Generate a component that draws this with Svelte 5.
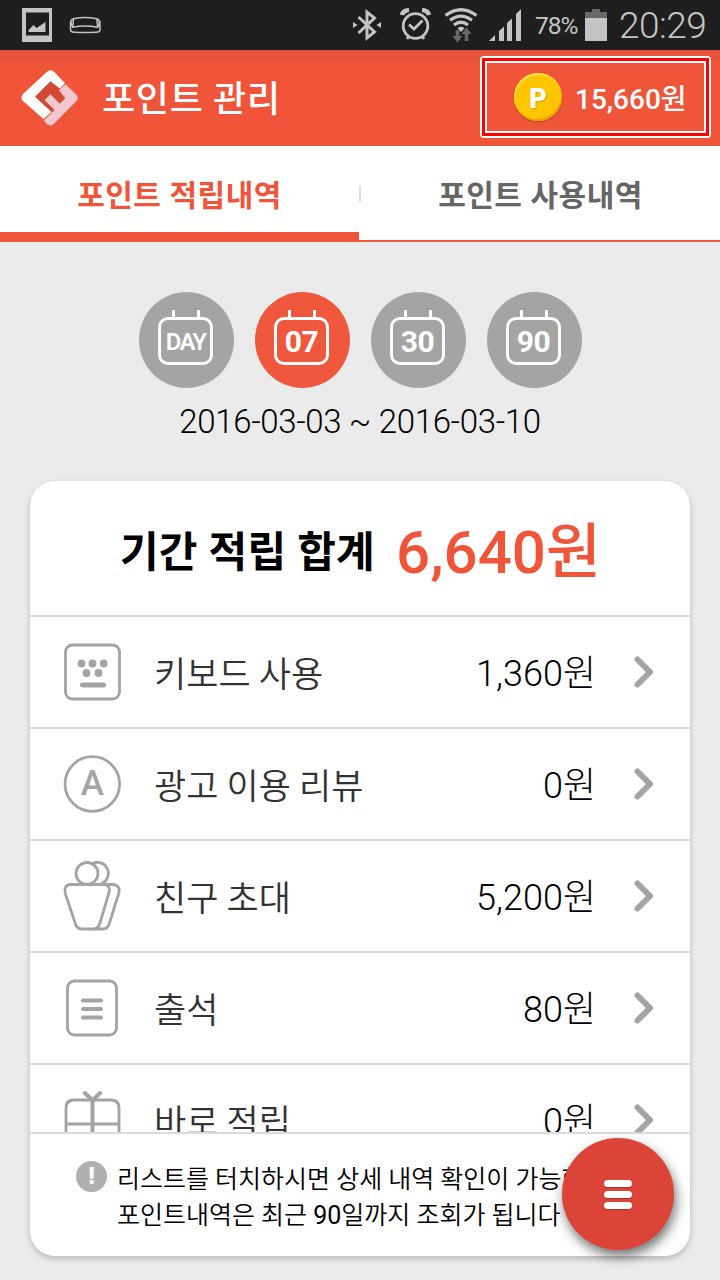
<script>
	const periods = [
		{ id: 'day', label: 'DAY' },
		{ id: '07', label: '07' },
		{ id: '30', label: '30' },
		{ id: '90', label: '90' },
	];
	const rows = [
		{ icon: 'keyboard', name: '키보드 사용', amount: '1,360' },
		{ icon: 'ad', name: '광고 이용 리뷰', amount: '0' },
		{ icon: 'friends', name: '친구 초대', amount: '5,200' },
		{ icon: 'attend', name: '출석', amount: '80' },
		{ icon: 'gift', name: '바로 적립', amount: '0' },
	];

	let tab = $state('earn');
	let period = $state('07');
</script>

<div class="screen">
	<div class="status">
		<svg class="notif" width="110" height="50" viewBox="0 0 110 50">
			<path d="M22 8h30v34H22zM26 12.500v23h23v-23z" fill="#c4c4c4" fill-rule="evenodd" />
			<path d="M28.500 32v-2l5-5 3 3 9-6v10z" fill="#c4c4c4" />
			<g fill="none" stroke="#c4c4c4" stroke-width="1.500">
				<path d="M73.500 18.700Q85 16.500 96.500 18.700 100 20 100 23v6.500q0 2.700-4 2.700-11 .8-22 0-3.500 0-3.500-2.700V23q0-3 3-4.300z" />
				<path d="M73.500 19.500l-.8 7.700q12.500-2.300 25 0l-.8-7.700M72.700 27.200q-2-2-1.500-5M97.700 27.200q2-2 1.500-5" />
			</g>
		</svg>
		<svg class="signals" width="180" height="50" viewBox="350 0 180 50">
			<path d="M358.500 17L374.500 32l-7.500 6V12l7.500 6L358.500 33" fill="none" stroke="#c4c4c4" stroke-width="3" />
			<path d="M353 22l4.500 3-4.500 3zM381 22l-4.500 3 4.500 3z" fill="#c4c4c4" />
			<g fill="none" stroke="#c4c4c4" stroke-width="2.800">
				<circle cx="415.500" cy="26" r="12.300" />
				<path d="M409 24.500l5 4.500 8.500-8.500M407 39l2-3M424 39l-2-3" />
				<path d="M402 15q1-4.500 7-5M429 15q-1-4.500-7-5" stroke-width="4.500" />
			</g>
			<g fill="none" stroke="#c4c4c4" stroke-width="3.200">
				<path d="M445.500 15.500Q461 4 476.500 15.500M450 20.300Q461 12 472 20.300M454 25Q461 19.500 468 25" />
				<path d="M457.500 28.200Q461 25.500 464.500 28.200L461 32z" fill="#c4c4c4" stroke="none" />
			</g>
			<path d="M455.700 30h3.600v6h3.200l-5 6.500-5-6.500h3.200zM464.700 41h3.600v-7h3.200l-5-6.500-5 6.500h3.200z" fill="#676767" />
			<path d="M489 41l6-6v6zM499 31l5-4.500V41h-5zM507 23l5-4.500V41h-5zM516 14l5-5v32h-5z" fill="#c4c4c4" />
		</svg>
		<span class="percent">78%</span>
		<svg class="battery" width="22" height="33" viewBox="0 0 22 33">
			<path d="M0 3h7V0h8v3h7v7H0z" fill="#676767" />
			<path d="M0 9h22v23H0z" fill="#c4c4c4" />
		</svg>
		<span class="clock">20:29</span>
	</div>

	<header>
		<svg class="logo" width="58" height="58" viewBox="0 0 58 58">
			<path d="M29 11L51 29 29 47 12 29z" fill="#d24a34" />
			<path d="M25.500 3.200q4-4 8 0L44 14.200 38.800 19.400 29.400 12.200 14 27.700 30.500 43 22.500 50 2.500 32.500q-4-4 0-8z" fill="#fff" />
			<path d="M44.500 15.200L55 25.300q3.700 3.500 0 7.200L33 54.800q-3.800 3.500-7.500 0L22.700 51.500 33.500 41 23.500 31l6-5.800 9.200 9.500 5.500-5.500-6.300-8z" fill="#f3c6d0" />
		</svg>
		<h1>포인트 관리</h1>
		<div class="balance">
			<div class="balance-mid">
				<div class="balance-in">
					<span class="coin">P</span>
					<span class="total">15,660원</span>
				</div>
			</div>
		</div>
	</header>

	<nav>
		<button class:active={tab === 'earn'} onclick={() => (tab = 'earn')}>포인트 적립내역</button>
		<i class="split"></i>
		<button class:active={tab === 'use'} onclick={() => (tab = 'use')}>포인트 사용내역</button>
	</nav>

	<div class="periods">
		{#each periods as p (p.id)}
			<button class="period" class:on={period === p.id} onclick={() => (period = p.id)}>
				<span class="cal" class:small={p.id === 'day'}>{p.label}</span>
			</button>
		{/each}
	</div>
	<p class="range">2016-03-03 ~ 2016-03-10</p>

	<section class="card">
		<div class="sum">
			<span class="sum-label">기간 적립 합계</span>
			<span class="sum-value">6,640원</span>
		</div>
		<ul>
			{#each rows as row (row.name)}
				<li>
					<svg class="icon" width="60" height="72" viewBox="0 0 60 72">
						{#if row.icon === 'keyboard'}
							<rect x="3.500" y="9" width="54" height="54" rx="7" />
							<g class="fill">
								<circle cx="19.500" cy="27.500" r="3.900" />
								<circle cx="30.500" cy="27.500" r="3.900" />
								<circle cx="41.700" cy="27.500" r="3.900" />
								<circle cx="24.500" cy="37" r="3.900" />
								<circle cx="36.500" cy="37" r="3.900" />
								<rect x="18" y="46.500" width="26" height="5" rx="2.500" />
							</g>
						{:else if row.icon === 'ad'}
							<circle cx="30.300" cy="36" r="27.300" />
							<text x="30.300" y="47">A</text>
						{:else if row.icon === 'friends'}
							<circle cx="25" cy="13.500" r="11" />
							<path d="M29.500 4A11 11 0 1 1 39.500 23.500" />
							<path d="M8.500 24.500H41q8 0 6 8L38 63q-2 6-6 6H20q-5 0-6.500-5L3.200 33.500Q1.500 25 8.500 24.500z" />
							<path d="M41 24.500H51q8 1 5.700 9L47.500 63q-2 6-6 6H32" />
						{:else if row.icon === 'attend'}
							<rect x="5.500" y="9" width="49" height="54" rx="7" />
							<path class="bars" d="M21 28.500h18M21 37h18M21 45.500h18" />
						{:else}
							<path d="M4 70V24q0-8 8-8h37q8 0 8 8v46M4 40h53" />
							<path class="bars" d="M30.500 70V16M23 9l7.500 7.500L38 9" />
						{/if}
					</svg>
					<span class="name">{row.name}</span>
					<span class="amount">{row.amount}원</span>
					<svg class="arrow" width="20" height="32" viewBox="0 0 20 32">
						<path d="M3.500 3.500L16 16 3.500 28.500" />
					</svg>
				</li>
			{/each}
		</ul>
		<footer>
			<span class="info">!</span>
			<p>리스트를 터치하시면 상세 내역 확인이 가능합니다<br />포인트내역은 최근 <span class="num">90</span>일까지 조회가 됩니다</p>
		</footer>
	</section>

	<button class="fab" aria-label="메뉴">
		<i></i><i></i><i></i>
	</button>
</div>

<style>
	:global(body) {
		overflow: hidden;
	}
	.screen {
		position: relative;
		width: 720px;
		height: 1280px;
		overflow: hidden;
		background: #ebebeb;
		font-family: Roboto, 'Noto Sans CJK KR', sans-serif;
		color: #000;
		white-space: nowrap;
	}
	button {
		padding: 0;
		border: 0;
		font: inherit;
	}
	.status {
		display: flex;
		align-items: center;
		height: 50px;
		background: #1e1e1e;
		color: #c4c4c4;
	}
	.signals {
		margin-left: 240px;
	}
	.percent {
		width: 44px;
		margin-left: 5px;
		padding-top: 1px;
		font-size: 24.500px;
		letter-spacing: -1px;
	}
	.battery {
		margin-left: 6px;
	}
	.clock {
		margin-left: 12px;
		font-size: 37px;
		font-weight: 300;
		letter-spacing: -0.5px;
	}
	header {
		display: flex;
		align-items: center;
		box-sizing: border-box;
		height: 96px;
		padding: 0 9px 0 21px;
		background: linear-gradient(#e04f38, #e8523a 3px, #f0553a 18px);
		color: #fff;
	}
	.logo {
		flex: none;
	}
	h1 {
		margin: 0 auto 0 23px;
		padding-top: 4px;
		font-size: 36px;
		font-weight: 500;
		letter-spacing: 0.7px;
		line-height: 50px;
	}
	.balance {
		margin-bottom: 2px;
		border: 2px solid #fff;
		border-radius: 4px;
		background: #fff;
	}
	.balance-mid {
		border: 3px solid #f00;
		background: #f0553a;
	}
	.balance-in {
		display: flex;
		align-items: center;
		box-sizing: border-box;
		width: 221px;
		height: 72px;
		padding-left: 27px;
		border: 2px solid #fff;
	}
	.coin {
		width: 48px;
		height: 48px;
		border-radius: 50%;
		background: #ffc600;
		box-shadow: inset 1px 2px 1px #ffe04d, inset -1px -2px 1px #e9a400, 0 1px 2px rgba(0, 0, 0, 0.25);
		font-size: 27px;
		font-weight: 900;
		line-height: 52px;
		text-align: center;
		text-shadow: 1px 1px 1px rgba(160, 110, 0, 0.4);
	}
	.total {
		margin-left: 13px;
		font-size: 28px;
		font-weight: 500;
	}
	nav {
		display: flex;
		align-items: center;
		height: 96px;
		background: linear-gradient(#f0553a, #f0553a) bottom / 100% 2px no-repeat #fff;
	}
	nav button {
		box-sizing: border-box;
		width: 359px;
		height: 96px;
		padding-top: 7px;
		border-bottom: 10px solid transparent;
		background: none;
		color: #666;
		font-size: 30px;
		font-weight: 700;
		letter-spacing: 0.5px;
	}
	nav button.active {
		border-color: #f0553a;
		color: #f0553a;
	}
	.split {
		width: 2px;
		height: 16px;
		background: #ddd;
	}
	.periods {
		display: flex;
		justify-content: center;
		gap: 21px;
		padding: 50px 0 0 1px;
	}
	.period {
		display: flex;
		align-items: center;
		justify-content: center;
		width: 95px;
		height: 96px;
		border-radius: 50%;
		background: #a4a4a4;
		color: #fff;
	}
	.period.on {
		background: #f0583e;
	}
	.cal {
		position: relative;
		box-sizing: border-box;
		width: 55px;
		height: 48px;
		margin: 2px 2px 0 0;
		border: 3px solid #fff;
		border-radius: 10px;
		font-size: 30px;
		font-weight: 700;
		letter-spacing: -0.5px;
		line-height: 43px;
	}
	.cal.small {
		font-size: 24px;
		font-weight: 600;
		letter-spacing: -1.8px;
		line-height: 44px;
	}
	.cal::before {
		content: '';
		position: absolute;
		left: 11px;
		top: -10px;
		width: 22px;
		height: 9px;
		border: solid #fff;
		border-width: 0 3px;
	}
	.range {
		margin: 14px 0 0;
		font-size: 33px;
		font-weight: 300;
		letter-spacing: -0.35px;
		line-height: 40px;
		text-align: center;
	}
	.card {
		display: flex;
		flex-direction: column;
		height: 775px;
		margin: 39px 30px 0;
		border-radius: 25px;
		background: #fff;
		box-shadow: 0 3px 6px rgba(0, 0, 0, 0.22);
	}
	.sum {
		display: flex;
		align-items: center;
		justify-content: center;
		gap: 21px;
		height: 134px;
		border-bottom: 2px solid #dbdbdb;
	}
	.sum-label {
		padding-left: 1px;
		font-size: 42px;
		font-weight: 700;
		letter-spacing: 0.3px;
	}
	.sum-value {
		padding-bottom: 3px;
		color: #f0553a;
		font-size: 60px;
		font-weight: 500;
	}
	ul {
		height: 515px;
		margin: 0;
		padding: 0;
		overflow: hidden;
		list-style: none;
	}
	li {
		display: flex;
		align-items: center;
		height: 110px;
		padding: 0 36px 0 32px;
		border-bottom: 2px solid #dbdbdb;
		font-size: 35px;
	}
	.icon {
		fill: none;
		stroke: #a4a4a4;
		stroke-width: 2.8;
	}
	.icon .fill {
		fill: #a4a4a4;
		stroke: none;
	}
	.icon .bars {
		stroke-width: 4;
		stroke-linecap: round;
	}
	.icon text {
		fill: #a4a4a4;
		stroke: none;
		font-size: 35px;
		font-weight: 500;
		text-anchor: middle;
	}
	.name {
		margin-left: 32px;
		padding-bottom: 2px;
		color: #333;
		font-family: 'Noto Sans CJK KR', sans-serif;
		font-weight: 350;
		letter-spacing: 0.1px;
	}
	.amount {
		margin-left: auto;
		padding-bottom: 4px;
		font-size: 36px;
		font-weight: 300;
	}
	.arrow {
		margin-left: 38px;
		fill: none;
		stroke: #a4a4a4;
		stroke-width: 6;
		stroke-linecap: round;
		stroke-linejoin: round;
	}
	footer {
		display: flex;
		flex: 1;
		padding: 26px 0 0 46px;
		border-top: 2px solid #dbdbdb;
		overflow: hidden;
		font-size: 25px;
		font-weight: 350;
	}
	.info {
		flex: none;
		width: 31px;
		height: 31px;
		margin-top: 1px;
		border-radius: 50%;
		background: #b0b0b0;
		color: #fff;
		font-size: 24px;
		font-weight: 900;
		line-height: 31px;
		text-align: center;
	}
	footer p {
		margin: 2px 0 0 10px;
		line-height: 36px;
	}
	.num {
		font-weight: 400;
	}
	.fab {
		position: absolute;
		right: 46px;
		bottom: 30px;
		display: flex;
		flex-direction: column;
		align-items: center;
		justify-content: center;
		gap: 4px;
		width: 112px;
		height: 112px;
		border-radius: 50%;
		background: #dc4437;
		box-shadow: 2px 6px 12px rgba(0, 0, 0, 0.55);
	}
	.fab i {
		width: 28px;
		height: 7px;
		border-radius: 4px;
		background: #fff;
		box-shadow: 0 1px 1px rgba(0, 0, 0, 0.25);
	}
</style>
